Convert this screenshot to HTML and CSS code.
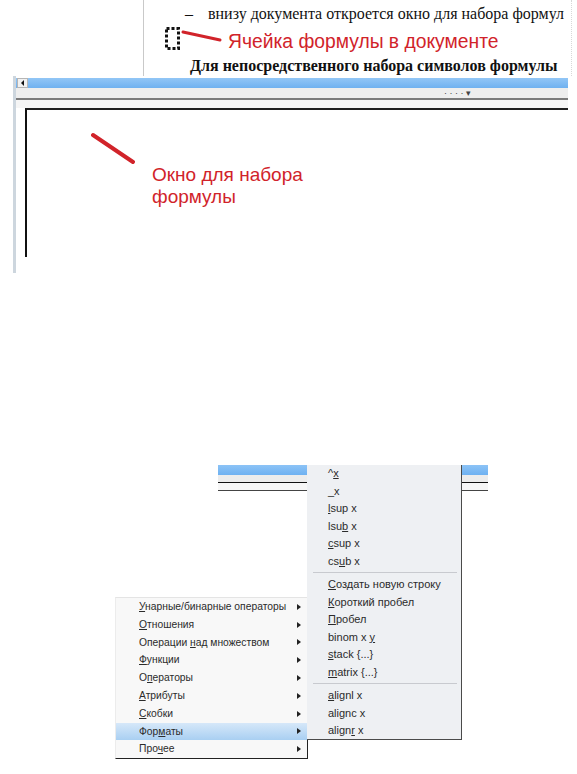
FILE: index.html
```html
<!DOCTYPE html>
<html lang="ru">
<head>
<meta charset="utf-8">
<link rel="stylesheet" href="styles.css">
</head>
<body>
<div class="page">
  <section class="doc">
    <div class="doc-row r1"><span class="dash">–</span><span>внизу документа откроется окно для набора формул</span></div>
    <div class="doc-row r2">
      <svg class="cell" width="15" height="23" viewBox="0 0 15 23"><rect x="1.5" y="1.5" width="12" height="20" fill="none" stroke="#111" stroke-width="3" stroke-dasharray="3 2"/></svg>
      <svg class="pointer" width="48" height="28" viewBox="0 0 48 28"><line x1="3" y1="4" x2="40" y2="12" stroke="#d1232a" stroke-width="3" stroke-linecap="round"/></svg>
      <span class="red-label">Ячейка формулы в документе</span>
    </div>
    <div class="doc-row r3"><b>Для непосредственного набора символов формулы</b></div>
  </section>

  <section class="editor">
    <div class="tbar"><span class="scroll-btn"><svg width="9" height="8" viewBox="0 0 9 8"><polygon points="3,4 6,1 6,7" fill="#111"/></svg></span></div>
    <div class="strip"><span class="dots">· · · · ▾</span></div>
    <div class="rule"></div>
    <div class="gap"></div>
    <div class="textarea">
      <svg class="pointer2" width="50" height="32" viewBox="0 0 50 32"><line x1="2" y1="3" x2="42" y2="30" stroke="#d1232a" stroke-width="4" stroke-linecap="round"/></svg>
      <div class="red-label big">Окно для набора<br>формулы</div>
    </div>
  </section>

  <section class="fig3">
    <div class="menubar">
      <div class="mb-blue"></div>
      <div class="mb-grey"></div>
      <div class="mb-line"></div>
      <div class="mb-light"></div>
      <div class="mb-line2"></div>
    </div>

    <div class="submenu">
      <div class="item">^<u>x</u></div>
      <div class="item">_x</div>
      <div class="item"><u>l</u>sup x</div>
      <div class="item">lsu<u>b</u> x</div>
      <div class="item"><u>c</u>sup x</div>
      <div class="item">cs<u>u</u>b x</div>
      <div class="sep"></div>
      <div class="item"><u>С</u>оздать новую строку</div>
      <div class="item"><u>К</u>ороткий пробел</div>
      <div class="item"><u>П</u>робел</div>
      <div class="item">binom x <u>y</u></div>
      <div class="item"><u>s</u>tack {...}</div>
      <div class="item"><u>m</u>atrix {...}</div>
      <div class="sep"></div>
      <div class="item"><u>a</u>lignl x</div>
      <div class="item">alignc x</div>
      <div class="item">align<u>r</u> x</div>
    </div>

    <div class="mainmenu">
      <div class="mitem"><span><u>У</u>нарные/бинарные операторы</span><i class="arr"></i></div>
      <div class="mitem"><span><u>О</u>тношения</span><i class="arr"></i></div>
      <div class="mitem"><span>Операции <u>н</u>ад множеством</span><i class="arr"></i></div>
      <div class="mitem"><span><u>Ф</u>ункции</span><i class="arr"></i></div>
      <div class="mitem"><span>О<u>п</u>ераторы</span><i class="arr"></i></div>
      <div class="mitem"><span><u>А</u>трибуты</span><i class="arr"></i></div>
      <div class="mitem"><span><u>С</u>кобки</span><i class="arr"></i></div>
      <div class="mitem active"><span>Фор<u>м</u>аты</span><i class="arr"></i></div>
      <div class="mitem"><span>Про<u>ч</u>ее</span><i class="arr"></i></div>
    </div>
  </section>
</div>
</body>
</html>
```

FILE: styles.css
```css
* { box-sizing: border-box; }
html, body { margin: 0; padding: 0; background: #fff; }
.page {
  width: 577px;
  height: 774px;
  overflow: hidden;
  font-family: "Liberation Sans", Arial, sans-serif;
}

/* ---------- document fragment ---------- */
.doc {
  margin-left: 143px;
  width: 434px;
  height: 76px;
  border-left: 1px solid #c9c9c9;
  font-family: "Liberation Serif", "Times New Roman", serif;
  font-size: 16px;
  color: #111;
  position: relative;
}
.doc::after {
  content: "";
  position: absolute;
  right: 5px;
  top: 0;
  bottom: 0;
  border-right: 1px dotted #d8d8d8;
}
.doc-row { display: flex; align-items: flex-start; white-space: nowrap; }
.r1 { height: 28px; line-height: 28px; padding-left: 41px; }
.dash { display: inline-block; width: 23px; }
.r2 { height: 28px; }
.cell { margin-left: 21px; margin-top: -1px; flex: none; }
.pointer { flex: none; }
.red-label {
  font-family: "Liberation Sans", Arial, sans-serif;
  color: #d1232a;
}
.r2 .red-label { font-size: 19.3px; line-height: 28px; }
.r3 { height: 20px; line-height: 20px; padding-left: 46px; }
.r3 b { font-weight: bold; }

/* ---------- editor fragment ---------- */
.editor {
  margin-left: 13px;
  width: 555px;
  height: 197px;
  border-left: 3px solid #cdd6de;
  padding-top: 2px;
}
.tbar {
  height: 10px;
  background: linear-gradient(#92c6f6, #6fb1f0);
  display: flex;
  align-items: stretch;
}
.scroll-btn {
  margin-left: 1px;
  width: 11px;
  background: #f1f1f1;
  border: 1px solid #b5b5b5;
  display: flex;
  align-items: center;
  justify-content: center;
}
.strip {
  height: 10px;
  background: #eeeeee;
  padding-left: 428px;
  font-size: 9px;
  line-height: 10px;
  color: #444;
}
.rule { height: 2px; background: #7b7b7b; }
.gap { height: 8px; background: #f5f5f5; }
.textarea {
  margin-left: 9px;
  height: 149px;
  background: #fff;
  border-top: 2px solid #1e1e1e;
  border-left: 2px solid #111;
  padding-top: 22px;
  display: flex;
  flex-direction: column;
  align-items: flex-start;
}
.pointer2 { margin-left: 64px; flex: none; display: block; }
.red-label.big {
  margin-left: 125px;
  font-size: 19px;
  line-height: 22px;
}

/* ---------- menu fragment ---------- */
.fig3 {
  margin-top: 192px;
  position: relative;
  height: 309px;
}
.menubar { margin-left: 218px; width: 270px; height: 27px; }
.mb-blue { height: 10px; margin-top: 1px; background: linear-gradient(#8cc3f6, #6eb1f1); }
.mb-grey { height: 7px; background: #ececec; }
.mb-line { height: 1px; background: #111; }
.mb-light { height: 7px; background: #f6f6f6; }
.mb-line2 { height: 1px; background: #444; }

.submenu {
  position: absolute;
  left: 307px;
  top: 0;
  width: 155px;
  height: 275px;
  background: #eef0f3;
  border-right: 1px solid #4a4a4a;
  border-bottom: 1px solid #4a4a4a;
  z-index: 2;
}
.item {
  height: 17.5px;
  line-height: 17.5px;
  padding-left: 21px;
  font-size: 11px;
  color: #2b2b2b;
  white-space: nowrap;
}
.sep {
  height: 1px;
  margin: 2px 4px 3px 6px;
  background: #c8cacf;
}
u { text-decoration: underline; text-underline-offset: 1px; }

.mainmenu {
  position: absolute;
  left: 115px;
  top: 132px;
  width: 193px;
  background: #f8f8f8;
  border-top: 1px solid #e4e4e4;
  border-left: 1px solid #ececec;
  border-right: 1px solid #222;
  border-bottom: 1px solid #222;
  z-index: 1;
}
.mitem {
  height: 17.8px;
  line-height: 17.8px;
  padding-left: 23px;
  padding-right: 6px;
  font-size: 10.3px;
  color: #2b2b2b;
  display: flex;
  justify-content: space-between;
  align-items: center;
  white-space: nowrap;
}
.mitem.active { background: linear-gradient(#d6e8f9, #a9cff2); }
.arr {
  width: 0;
  height: 0;
  border-top: 3px solid transparent;
  border-bottom: 3px solid transparent;
  border-left: 4px solid #222;
}
```
